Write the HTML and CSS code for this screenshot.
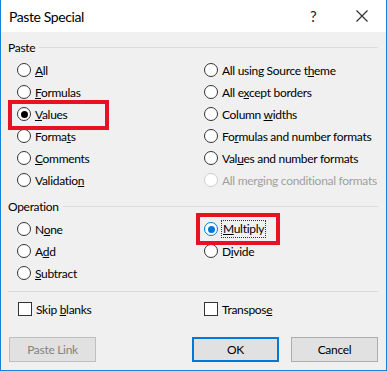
FILE: index.html
```html
<!DOCTYPE html>
<html>
<head>
<meta charset="utf-8">
<link rel="stylesheet" href="styles.css">
</head>
<body>
<div class="dialog">
  <div class="titlebar">
    <span class="title">Paste Special</span>
    <span class="help">?</span>
    <span class="close"><svg width="12" height="12" viewBox="0 0 12 12"><path d="M0.5 0.5L11.5 11.5M11.5 0.5L0.5 11.5" stroke="#2b2b2b" stroke-width="1.1" fill="none"/></svg></span>
  </div>
  <div class="body">
    <div class="group-head"><span>Paste</span><span class="rule"></span></div>
    <div class="opts opts6">
      <div class="opt"><span class="radio"></span><span><u>A</u>ll</span></div>
      <div class="opt"><span class="radio"></span><span><u>F</u>ormulas</span></div>
      <div class="opt"><span class="radio checked"></span><span><u>V</u>alues</span></div>
      <div class="opt"><span class="radio"></span><span>Forma<u>t</u>s</span></div>
      <div class="opt"><span class="radio"></span><span><u>C</u>omments</span></div>
      <div class="opt"><span class="radio"></span><span>Validatio<u>n</u></span></div>
      <div class="opt"><span class="radio"></span><span>All using Source t<u>h</u>eme</span></div>
      <div class="opt"><span class="radio"></span><span>All e<u>x</u>cept borders</span></div>
      <div class="opt"><span class="radio"></span><span>Column <u>w</u>idths</span></div>
      <div class="opt"><span class="radio"></span><span>Fo<u>r</u>mulas and number formats</span></div>
      <div class="opt"><span class="radio"></span><span>Val<u>u</u>es and number formats</span></div>
      <div class="opt disabled"><span class="radio"></span><span>All mergin<u>g</u> conditional formats</span></div>
    </div>
    <div class="group-head op-head"><span>Operation</span><span class="rule"></span></div>
    <div class="opts opts3">
      <div class="opt"><span class="radio"></span><span>N<u>o</u>ne</span></div>
      <div class="opt"><span class="radio"></span><span>A<u>d</u>d</span></div>
      <div class="opt"><span class="radio"></span><span><u>S</u>ubtract</span></div>
      <div class="opt"><span class="radio checked focus"></span><span class="focus-rect"><u>M</u>ultiply</span></div>
      <div class="opt"><span class="radio"></span><span>D<u>i</u>vide</span></div>
    </div>
    <div class="sep"></div>
    <div class="checks">
      <div class="opt"><span class="check"></span><span>Skip <u>b</u>lanks</span></div>
      <div class="opt"><span class="check"></span><span>Transpos<u>e</u></span></div>
    </div>
    <div class="buttons">
      <span class="btn disabled">Paste Link</span>
      <span class="spacer"></span>
      <span class="btn default">OK</span>
      <span class="btn">Cancel</span>
    </div>
  </div>
  <div class="mark mark-values"></div>
  <div class="mark mark-multiply"></div>
</div>
</body>
</html>
```
FILE: styles.css
```css
html, body {
  margin: 0;
  padding: 0;
  background: #ffffff;
}
.dialog {
  position: relative;
  box-sizing: border-box;
  width: 387px;
  height: 371px;
  border: 1px solid #1a82d6;
  border-top: none;
  background: #f0f0f0;
  font-family: Lato, "Noto Sans", sans-serif;
  font-size: 12px;
  letter-spacing: -0.3px;
  color: #000;
  overflow: hidden;
}
.titlebar {
  height: 32px;
  background: #fff;
  display: flex;
  align-items: center;
  padding-left: 8px;
}
.title {
  font-size: 14px;
  letter-spacing: -0.4px;
  color: #000;
}
.help {
  margin-left: auto;
  font-size: 15px;
  color: #222;
  width: 12px;
}
.close {
  display: flex;
  margin-left: 34px;
  margin-right: 18px;
}
.body {
  padding: 0 8px 0 7px;
}
.group-head {
  display: flex;
  align-items: center;
  gap: 4px;
  height: 14px;
  margin-top: 8px;
}
.group-head .rule {
  flex: 1;
  height: 1px;
  background: #dcdcdc;
}
.op-head {
  margin-top: 8px;
}
.opts {
  display: grid;
  grid-template-columns: 187px 1fr;
  grid-auto-flow: column;
  grid-auto-rows: 22px;
  padding-left: 9px;
  margin-top: 5px;
}
.opts6 {
  grid-template-rows: repeat(6, 22px);
}
.opts3 {
  grid-template-rows: repeat(3, 22px);
}
.opt {
  display: flex;
  align-items: center;
  gap: 4px;
  height: 22px;
  white-space: nowrap;
}
.radio {
  box-sizing: border-box;
  width: 14px;
  height: 14px;
  border: 1px solid #333;
  border-radius: 50%;
  background: #fff;
  display: flex;
  align-items: center;
  justify-content: center;
  flex: none;
}
.radio.checked::after {
  content: "";
  width: 7px;
  height: 7px;
  border-radius: 50%;
  background: #000;
}
.radio.focus {
  border-color: #0078d7;
}
.radio.focus::after {
  background: #0078d7;
}
.opt.disabled {
  color: #a0a0a0;
}
.opt.disabled .radio {
  border-color: #cccccc;
}
.focus-rect {
  outline: 1px dotted #333;
  outline-offset: 0;
  padding: 0 1px;
  line-height: 16px;
}
.sep {
  height: 1px;
  background: #dcdcdc;
  margin-top: 7px;
}
.checks {
  display: grid;
  grid-template-columns: 186px 1fr;
  padding-left: 10px;
  margin-top: 6px;
}
.check {
  box-sizing: border-box;
  width: 14px;
  height: 14px;
  border: 1px solid #333;
  background: #fff;
  flex: none;
}
.buttons {
  display: flex;
  margin-top: 17px;
  padding-left: 1px;
  gap: 12px;
}
.spacer {
  flex: 1;
}
.btn {
  box-sizing: border-box;
  width: 87px;
  height: 25px;
  display: flex;
  align-items: center;
  justify-content: center;
  background: #e1e1e1;
  border: 1px solid #adadad;
}
.btn.default {
  border: 2px solid #0078d7;
}
.btn.disabled {
  color: #838383;
  border-color: #bfbfbf;
}
.mark {
  position: absolute;
  box-sizing: border-box;
  border: 4px solid #e81123;
}
.mark-values {
  left: 7px;
  top: 100px;
  width: 101px;
  height: 30px;
}
.mark-multiply {
  left: 195px;
  top: 213px;
  width: 84px;
  height: 32px;
}
```
